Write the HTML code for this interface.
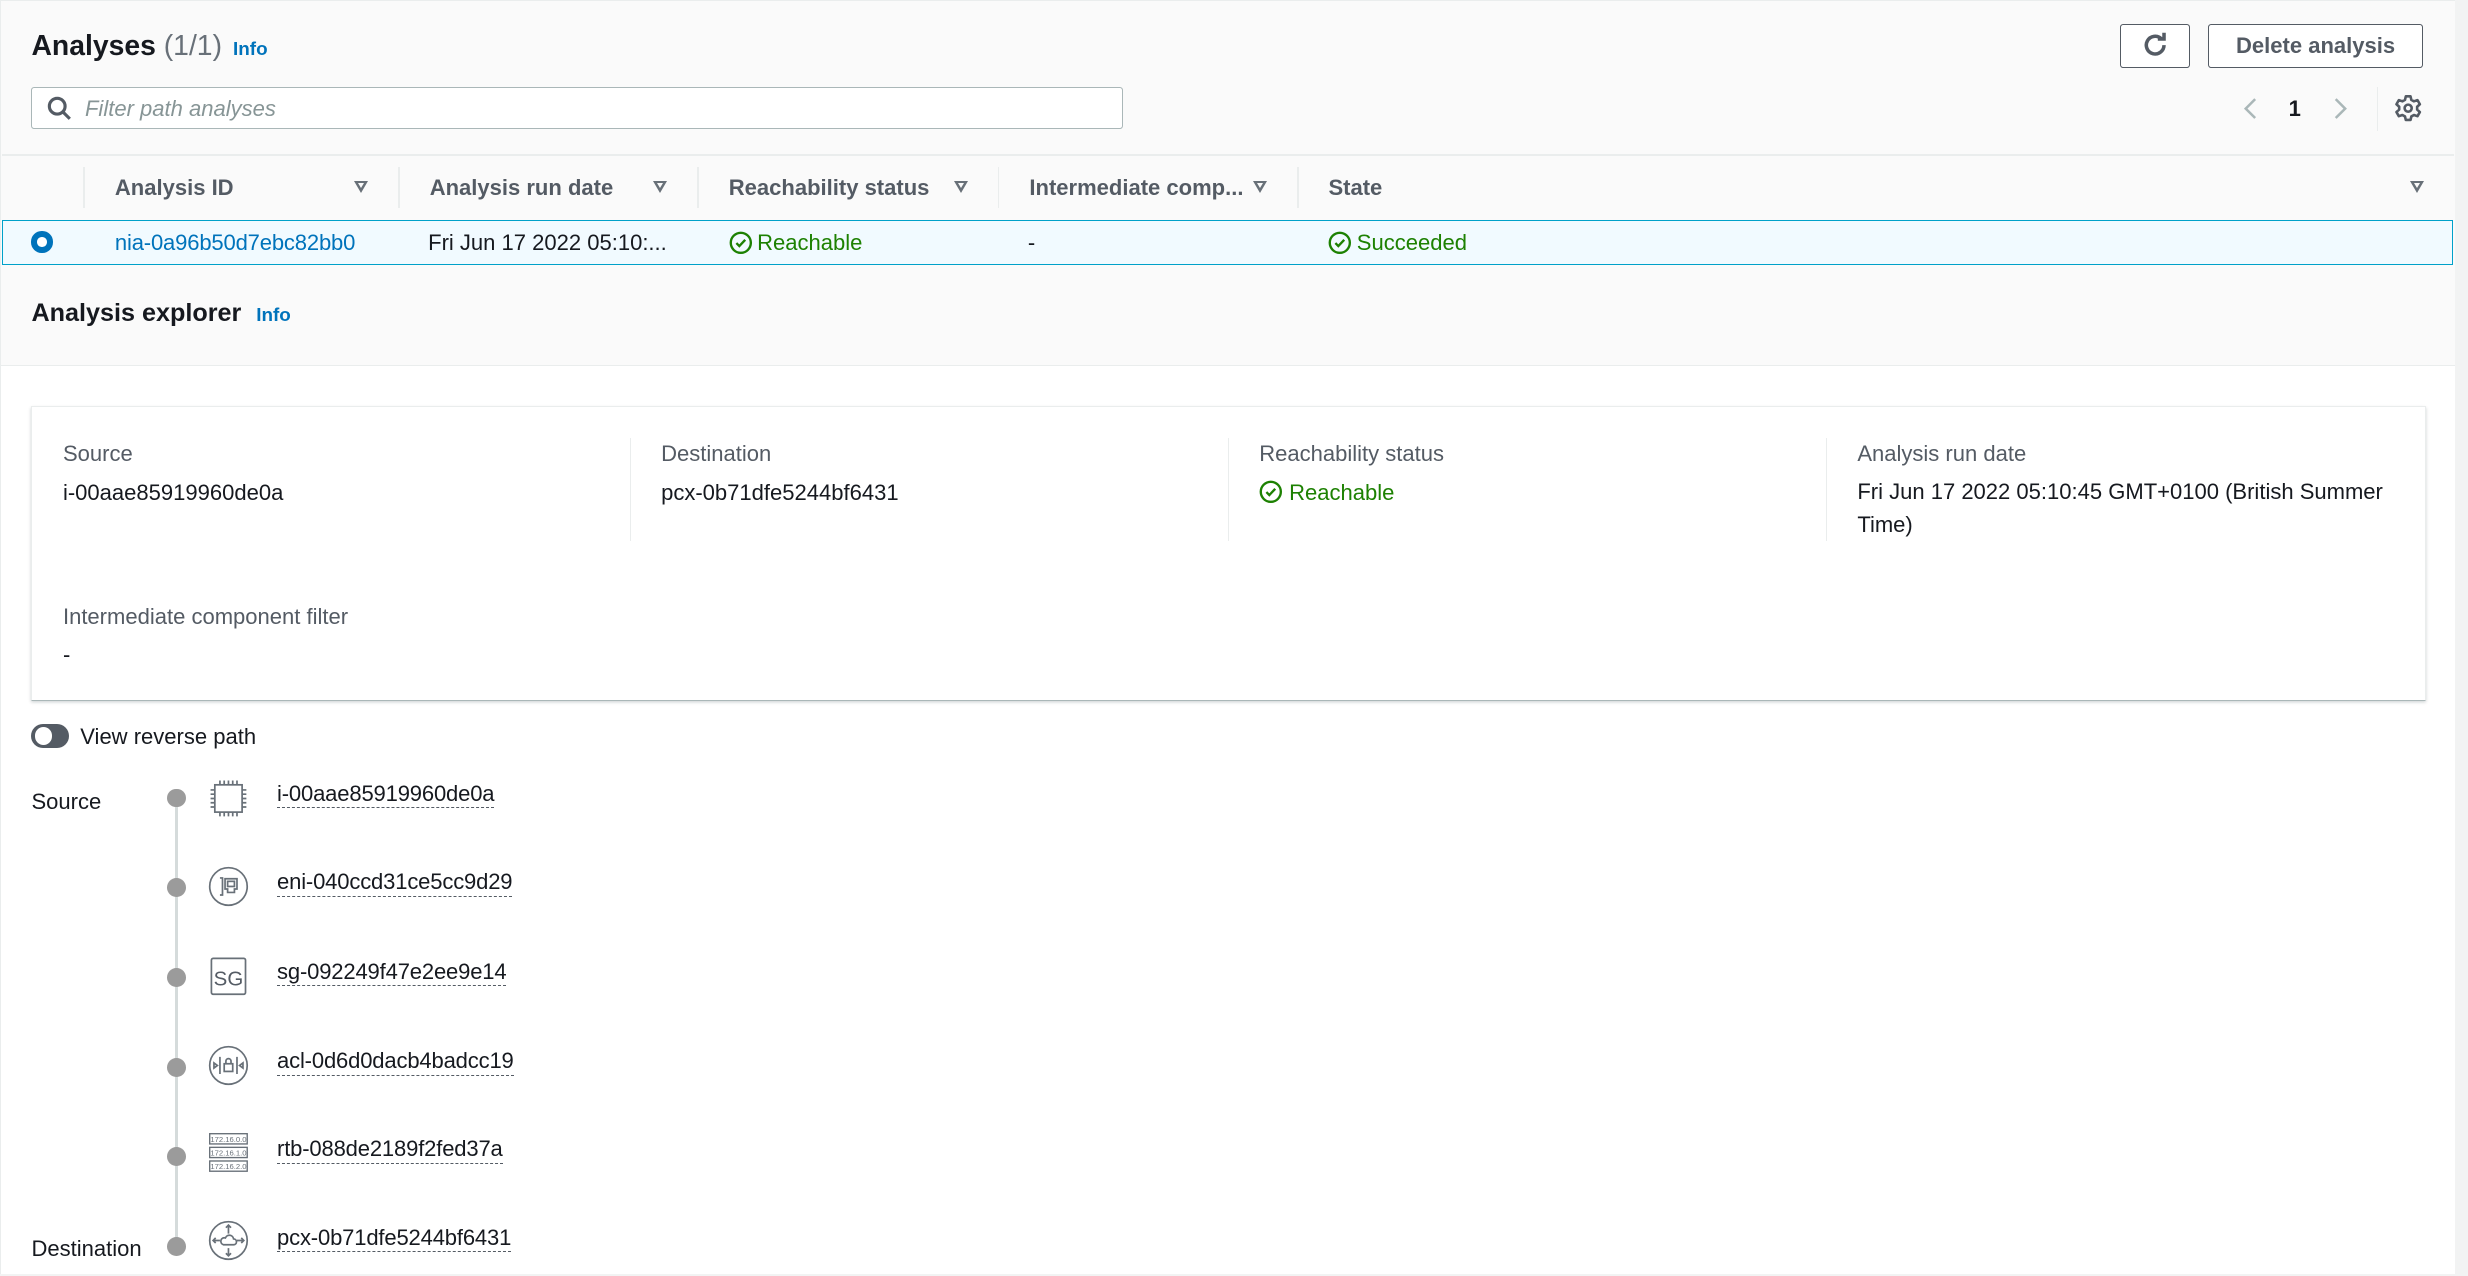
<!DOCTYPE html>
<html><head><meta charset="utf-8"><style>
html,body{margin:0;padding:0;background:#f2f3f3;overflow:hidden}
body{width:2468px;height:1276px}
#w{zoom:1.574;width:1568px;height:811px;position:relative;font-family:"Liberation Sans",sans-serif;color:#16191f;font-size:14px}
.a{position:absolute;white-space:nowrap}
.info{color:#0073bb;font-weight:bold;font-size:12px}
.th{font-weight:bold;color:#545b64;font-size:14px}
.tri{position:absolute;width:0;height:0;border-left:5px solid transparent;border-right:5px solid transparent;border-top:8px solid #687078}
.tri:after{content:"";position:absolute;left:-2px;top:-6.5px;border-left:2px solid transparent;border-right:2px solid transparent;border-top:3.5px solid #fafafa}
.vd{position:absolute;width:1px;background:#eaeded}
.lab{color:#545b64}
.green{color:#1d8102}
.dot{position:absolute;left:106px;width:12px;height:12px;border-radius:50%;background:#9b9b9b}
.lnk{position:absolute;left:176px;border-bottom:1px dashed #545b64;line-height:17px;font-size:14px;letter-spacing:-0.1px}
</style></head><body><div id="w">
<div class="a" style="left:0;top:0;width:1559px;height:232px;background:#fafafa;border-left:1px solid #eaeded;border-top:1px solid #eaeded"></div>
<div class="a" style="left:0;top:232px;width:1559px;height:577px;background:#fff;border-left:1px solid #eaeded;border-top:1px solid #eaeded"></div>

<div class="a" style="left:20px;top:19px;font-size:18px;font-weight:bold">Analyses <span style="font-weight:normal;color:#687078">(1/1)</span> <span class="info" style="margin-left:2px">Info</span></div>

<div class="a" style="left:1347px;top:15px;width:43px;height:27px;border:1px solid #545b64;border-radius:2px;background:#fff"></div>
<svg class="a" style="left:1360px;top:20px" width="18" height="18" viewBox="0 0 16 16"><path d="M13 8a5 5 0 1 1-1.5-3.6" fill="none" stroke="#545b64" stroke-width="2"/><path d="M9.5 4.5h3.5V1" fill="none" stroke="#545b64" stroke-width="2"/></svg>
<div class="a" style="left:1403px;top:15px;width:135px;height:27px;border:1px solid #545b64;border-radius:2px;background:#fff;text-align:center;line-height:27px;font-weight:bold;color:#545b64">Delete analysis</div>

<div class="a" style="left:20px;top:55px;width:692px;height:26px;border:1px solid #aab7b8;border-radius:2px;background:#fff"></div>
<svg class="a" style="left:30px;top:61px" width="16" height="16" viewBox="0 0 16 16"><circle cx="6.5" cy="6.5" r="5" fill="none" stroke="#545b64" stroke-width="2"/><path d="M10 10l4.5 4.5" stroke="#545b64" stroke-width="2"/></svg>
<div class="a" style="left:54px;top:61px;color:#879596;font-style:italic">Filter path analyses</div>

<svg class="a" style="left:1424px;top:61px" width="12" height="16" viewBox="0 0 12 16"><path d="M9 2L3 8l6 6" fill="none" stroke="#aab7b8" stroke-width="1.6"/></svg>
<div class="a" style="left:1454px;top:61px;font-weight:bold">1</div>
<svg class="a" style="left:1481px;top:61px" width="12" height="16" viewBox="0 0 12 16"><path d="M3 2l6 6-6 6" fill="none" stroke="#aab7b8" stroke-width="1.6"/></svg>
<div class="vd" style="left:1510px;top:55px;height:28px"></div>
<svg class="a" style="left:1521px;top:60px" width="18" height="18" viewBox="0 0 24 24"><path d="M10 2h4l.7 3 2.2 1.2 3-1 2 3.5-2.3 2.1v2.4l2.3 2.1-2 3.5-3-1-2.2 1.2-.7 3h-4l-.7-3-2.2-1.2-3 1-2-3.5 2.3-2.1v-2.4L2.1 8.7l2-3.5 3 1L9.3 5z" fill="none" stroke="#545b64" stroke-width="2.2" stroke-linejoin="round"/><circle cx="12" cy="12" r="3" fill="none" stroke="#545b64" stroke-width="2.2"/></svg>

<div class="a" style="left:1px;top:98px;width:1558px;height:1px;background:#eaeded"></div>
<div class="vd" style="left:53px;top:106px;height:26px"></div>
<div class="vd" style="left:253px;top:106px;height:26px"></div>
<div class="vd" style="left:443px;top:106px;height:26px"></div>
<div class="vd" style="left:634px;top:106px;height:26px"></div>
<div class="vd" style="left:824px;top:106px;height:26px"></div>
<div class="a th" style="left:73px;top:111px">Analysis ID</div><div class="tri" style="left:225px;top:115px"></div>
<div class="a th" style="left:273px;top:111px">Analysis run date</div><div class="tri" style="left:415px;top:115px"></div>
<div class="a th" style="left:463px;top:111px">Reachability status</div><div class="tri" style="left:606px;top:115px"></div>
<div class="a th" style="left:654px;top:111px">Intermediate comp...</div><div class="tri" style="left:796px;top:115px"></div>
<div class="a th" style="left:844px;top:111px">State</div><div class="tri" style="left:1531px;top:115px"></div>

<div class="a" style="left:1px;top:140px;width:1556px;height:27px;background:#f1faff;border:1px solid #00a1c9"></div>
<div class="a" style="left:20px;top:147px;width:6px;height:6px;border:4px solid #0073bb;border-radius:50%;background:#fff"></div>
<div class="a" style="left:73px;top:146px;color:#0073bb;letter-spacing:-0.1px">nia-0a96b50d7ebc82bb0</div>
<div class="a" style="left:272px;top:146px">Fri Jun 17 2022 05:10:...</div>
<svg class="a" style="left:463px;top:147px" width="15" height="15" viewBox="0 0 16 16"><circle cx="8" cy="8" r="6.8" fill="none" stroke="#1d8102" stroke-width="1.6"/><path d="M5 8.2l2 2 4-4.2" fill="none" stroke="#1d8102" stroke-width="1.6"/></svg>
<div class="a green" style="left:481px;top:146px">Reachable</div>
<div class="a" style="left:653px;top:146px">-</div>
<svg class="a" style="left:844px;top:147px" width="15" height="15" viewBox="0 0 16 16"><circle cx="8" cy="8" r="6.8" fill="none" stroke="#1d8102" stroke-width="1.6"/><path d="M5 8.2l2 2 4-4.2" fill="none" stroke="#1d8102" stroke-width="1.6"/></svg>
<div class="a green" style="left:862px;top:146px">Succeeded</div>

<div class="a" style="left:20px;top:190px;font-size:16px;font-weight:bold">Analysis explorer <span class="info" style="margin-left:5px">Info</span></div>

<div class="a" style="left:20px;top:258px;width:1520px;height:186px;background:#fff;border:1px solid #eaeded;border-bottom:1px solid #aab7b8;box-shadow:0 1px 2px rgba(0,28,36,.2)"></div>
<div class="vd" style="left:400px;top:278px;height:66px"></div>
<div class="vd" style="left:780px;top:278px;height:66px"></div>
<div class="vd" style="left:1160px;top:278px;height:66px"></div>
<div class="a lab" style="left:40px;top:280px">Source</div>
<div class="a" style="left:40px;top:305px">i-00aae85919960de0a</div>
<div class="a lab" style="left:420px;top:280px">Destination</div>
<div class="a" style="left:420px;top:305px">pcx-0b71dfe5244bf6431</div>
<div class="a lab" style="left:800px;top:280px">Reachability status</div>
<svg class="a" style="left:800px;top:305px" width="15" height="15" viewBox="0 0 16 16"><circle cx="8" cy="8" r="6.8" fill="none" stroke="#1d8102" stroke-width="1.6"/><path d="M5 8.2l2 2 4-4.2" fill="none" stroke="#1d8102" stroke-width="1.6"/></svg>
<div class="a green" style="left:819px;top:305px">Reachable</div>
<div class="a lab" style="left:1180px;top:280px">Analysis run date</div>
<div class="a" style="left:1180px;top:302px;line-height:21px">Fri Jun 17 2022 05:10:45 GMT+0100 (British Summer<br>Time)</div>
<div class="a lab" style="left:40px;top:384px">Intermediate component filter</div>
<div class="a" style="left:40px;top:408px">-</div>

<div class="a" style="left:20px;top:460px;width:24px;height:15px;border-radius:8px;background:#545b64"></div>
<div class="a" style="left:22px;top:462px;width:11px;height:11px;border-radius:50%;background:#fff"></div>
<div class="a" style="left:51px;top:460px">View reverse path</div>

<div class="a" style="left:111px;top:507px;width:2px;height:285px;background:#d5dbdb"></div>
<div class="a" style="left:20px;top:501px">Source</div>
<div class="a" style="left:20px;top:785px">Destination</div>
<div class="dot" style="top:501px"></div><div class="dot" style="top:558px"></div><div class="dot" style="top:615px"></div><div class="dot" style="top:672px"></div><div class="dot" style="top:729px"></div><div class="dot" style="top:786px"></div>

<svg class="a" style="left:132px;top:494px" width="26" height="26" viewBox="0 0 24 24" fill="none" stroke="#687078" stroke-width="1"><rect x="4" y="4" width="16" height="16"/><path d="M7 1.5v2.5M9.5 1.5v2.5M12 1.5v2.5M14.5 1.5v2.5M17 1.5v2.5M7 20v2.5M9.5 20v2.5M12 20v2.5M14.5 20v2.5M17 20v2.5M1.5 7h2.5M1.5 9.5h2.5M1.5 12h2.5M1.5 14.5h2.5M1.5 17h2.5M20 7h2.5M20 9.5h2.5M20 12h2.5M20 14.5h2.5M20 17h2.5"/></svg>
<div class="lnk" style="top:496px">i-00aae85919960de0a</div>

<svg class="a" style="left:132px;top:550px" width="26" height="26" viewBox="0 0 24 24" fill="none" stroke="#687078" stroke-width="1"><circle cx="12" cy="12" r="11"/><path d="M7 7h1.5v10H7M10 7.5h7v6h-1.5v2h-4v-2H10z"/><rect x="11.5" y="9" width="4" height="3"/></svg>
<div class="lnk" style="top:552px">eni-040ccd31ce5cc9d29</div>

<svg class="a" style="left:132px;top:607px" width="26" height="26" viewBox="0 0 24 24"><rect x="2" y="2" width="20" height="21" rx="1" fill="none" stroke="#687078" stroke-width="1"/><text x="12" y="18" text-anchor="middle" font-family="Liberation Sans,sans-serif" font-size="12" fill="#545b64">SG</text></svg>
<div class="lnk" style="top:609px">sg-092249f47e2ee9e14</div>

<svg class="a" style="left:132px;top:664px" width="26" height="26" viewBox="0 0 24 24" fill="none" stroke="#687078" stroke-width="1"><circle cx="12" cy="12" r="11"/><path d="M7 7v10M17 7v10M3.5 10.5l2 1.5-2 1.5zM20.5 10.5l-2 1.5 2 1.5z"/><rect x="9.5" y="11" width="5" height="4.5"/><path d="M10.5 11V9.5a1.5 1.5 0 0 1 3 0V11"/></svg>
<div class="lnk" style="top:666px">acl-0d6d0dacb4badcc19</div>

<svg class="a" style="left:132px;top:719px" width="26" height="26" viewBox="0 0 24 24" fill="none" stroke="#687078" stroke-width="0.8"><rect x="1" y="1" width="22" height="6"/><rect x="1" y="9" width="22" height="6"/><rect x="1" y="17" width="22" height="6"/><text x="12" y="5.8" text-anchor="middle" font-size="4.5" fill="#687078" stroke="none" font-family="Liberation Sans">172.16.0.0</text><text x="12" y="13.8" text-anchor="middle" font-size="4.5" fill="#687078" stroke="none" font-family="Liberation Sans">172.16.1.0</text><text x="12" y="21.8" text-anchor="middle" font-size="4.5" fill="#687078" stroke="none" font-family="Liberation Sans">172.16.2.0</text></svg>
<div class="lnk" style="top:722px">rtb-088de2189f2fed37a</div>

<svg class="a" style="left:132px;top:775px" width="26" height="26" viewBox="0 0 24 24" fill="none" stroke="#687078" stroke-width="1"><circle cx="12" cy="12" r="11"/><path d="M12 3v5M10.5 4.5L12 3l1.5 1.5M12 16.5v4.5M10.5 19.5L12 21l1.5-1.5M3 12h4M4.5 10.5L3 12l1.5 1.5M17 12h4M19.5 10.5L21 12l-1.5 1.5M9 14.5h6a1.7 1.7 0 0 0 0-3.4 2.5 2.5 0 0 0-4.8-.6A2 2 0 0 0 9 14.5z"/></svg>
<div class="lnk" style="top:778px">pcx-0b71dfe5244bf6431</div>
</div></body></html>
